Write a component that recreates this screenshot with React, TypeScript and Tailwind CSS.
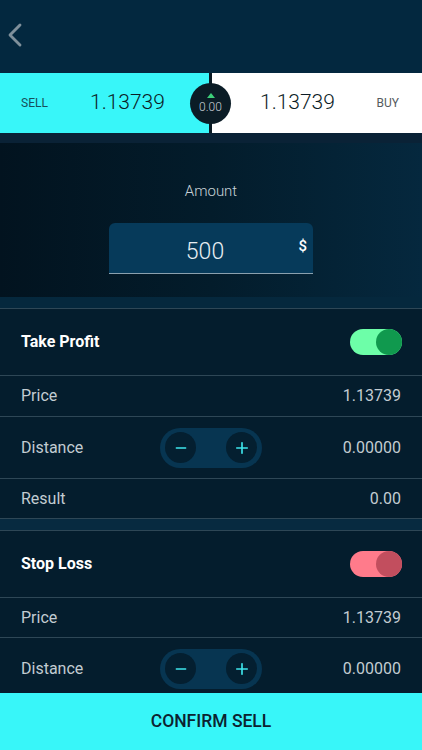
import { ChevronLeft, Minus, Plus } from 'lucide-react';

function Toggle({ track, knob }: { track: string; knob: string }) {
  return (
    <div className={`w-[52px] h-[26px] rounded-full flex justify-end ${track}`}>
      <div className={`w-[26px] h-[26px] rounded-full ${knob}`} />
    </div>
  );
}

function Stepper() {
  return (
    <div className="w-[102px] h-[40px] rounded-full bg-[#073551] flex items-center justify-between px-[5px]">
      <div className="w-[31px] h-[31px] rounded-full bg-[#041f30] flex items-center justify-center">
        <Minus className="w-[16px] h-[16px] text-[#3ee6ec]" strokeWidth={2.2} />
      </div>
      <div className="w-[31px] h-[31px] rounded-full bg-[#041f30] flex items-center justify-center">
        <Plus className="w-[18px] h-[18px] text-[#3ee6ec]" strokeWidth={2.2} />
      </div>
    </div>
  );
}

function Row({ label, value, h }: { label: string; value: string; h: string }) {
  return (
    <div className={`${h} border-t border-[#2e4756] flex items-center justify-between px-[21px]`}>
      <span className="text-[16px] text-[#c2ccd2]">{label}</span>
      <span className="text-[16px] text-[#c2ccd2]">{value}</span>
    </div>
  );
}

function DistanceRow() {
  return (
    <div className="h-[62px] shrink-0 border-t border-[#2e4756] grid grid-cols-[1fr_auto_1fr] items-center px-[21px]">
      <span className="text-[16px] text-[#c2ccd2]">Distance</span>
      <Stepper />
      <span className="text-[16px] text-[#c2ccd2] text-right">0.00000</span>
    </div>
  );
}

function ToggleRow({ label, track, knob }: { label: string; track: string; knob: string }) {
  return (
    <div className="h-[67px] shrink-0 border-t border-[#2e4756] flex items-center justify-between pl-[21px] pr-[20px]">
      <span className="text-[16px] font-bold text-white">{label}</span>
      <Toggle track={track} knob={knob} />
    </div>
  );
}

export default function App() {
  return (
    <div
      className="w-[422px] h-[750px] flex flex-col overflow-hidden bg-[#041d2d]"
      style={{ fontFamily: 'Roboto, "Noto Sans", sans-serif' }}
    >
      <div className="flex-1 overflow-hidden flex flex-col">
        {/* Header */}
        <div className="h-[73px] shrink-0 bg-[#03283f] flex items-center -ml-[5px]">
          <ChevronLeft className="w-[40px] h-[40px] text-[#7f909b] -mt-[3px]" strokeWidth={1.7} />
        </div>

        {/* Price bar */}
        <div className="h-[60px] shrink-0 flex relative">
          <div className="w-[209px] bg-[#38f6f9] flex items-center pl-[21px]">
            <span className="text-[12px] text-[#17505a] w-[69px]">SELL</span>
            <span className="text-[21px] font-light text-[#0c1c26]">1.13739</span>
          </div>
          <div className="w-[3px] bg-[#0a1a24]" />
          <div className="flex-1 bg-white flex items-center justify-between pl-[48px] pr-[23px]">
            <span className="text-[21px] font-light text-[#0c1c26]">1.13739</span>
            <span className="text-[12px] text-[#555b60]">BUY</span>
          </div>
          <div className="absolute left-[190px] top-[10px] w-[41px] h-[41px] rounded-full bg-[#0b1c26] flex flex-col items-center justify-center">
            <div className="w-0 h-0 border-l-[4px] border-r-[4px] border-b-[5px] border-l-transparent border-r-transparent border-b-[#3dcf7a] mb-[3px] -mt-[2px]" />
            <span className="text-[12px] font-light text-[#c5ced4] leading-none">0.00</span>
          </div>
        </div>

        <div className="h-[10px] shrink-0 bg-[#0a2236]" />

        {/* Amount */}
        <div className="h-[154px] shrink-0 bg-gradient-to-r from-[#02131f] via-[#031c2b] to-[#05283e] flex flex-col items-center pt-[37px]">
          <span className="text-[15px] font-light text-[#c8d2d8]">Amount</span>
          <div className="mt-[20px] w-[204px] h-[51px] rounded-t-md bg-[#063a5a] border-b border-[#8aa0ae] relative flex items-center justify-center">
            <span className="text-[23px] font-light text-[#e6eef2] mt-[10px] -ml-[12px]">500</span>
            <span className="absolute right-[6px] top-[12px] text-[15px] font-medium text-white">$</span>
          </div>
        </div>

        <div className="h-[11px] shrink-0 bg-[#05283d]" />

        {/* Take Profit */}
        <ToggleRow label="Take Profit" track="bg-[#6dfea8]" knob="bg-[#10994e]" />
        <Row label="Price" value="1.13739" h="h-[41px] shrink-0" />
        <DistanceRow />
        <Row label="Result" value="0.00" h="h-[40px] shrink-0" />

        <div className="h-[12px] shrink-0 border-t border-[#2e4756] bg-[#072a40]" />

        {/* Stop Loss */}
        <ToggleRow label="Stop Loss" track="bg-[#ff7b8b]" knob="bg-[#c24e5e]" />
        <Row label="Price" value="1.13739" h="h-[40px] shrink-0" />
        <DistanceRow />
      </div>

      <button className="h-[57px] shrink-0 bg-[#38f6f9] flex items-center justify-center text-[17.5px] font-medium text-[#0c2230]">
        CONFIRM SELL
      </button>
    </div>
  );
}
